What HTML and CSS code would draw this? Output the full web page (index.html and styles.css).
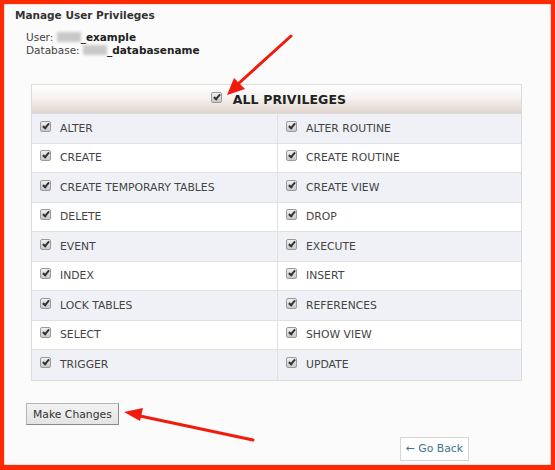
FILE: index.html
```html
<!DOCTYPE html>
<html>
<head>
<meta charset="utf-8">
<link rel="stylesheet" href="styles.css">
</head>
<body>
<div class="frame">
  <div class="title">Manage User Privileges</div>
  <div class="info">
    <div>User: <span class="blur"></span><b>_example</b></div>
    <div>Database: <span class="blur"></span><b>_databasename</b></div>
  </div>
  <div class="table">
    <div class="head"><span class="cb"></span><span>ALL PRIVILEGES</span></div>
    <div class="row odd"><div class="cell"><span class="cb"></span>ALTER</div><div class="cell"><span class="cb"></span>ALTER ROUTINE</div></div>
    <div class="row"><div class="cell"><span class="cb"></span>CREATE</div><div class="cell"><span class="cb"></span>CREATE ROUTINE</div></div>
    <div class="row odd"><div class="cell"><span class="cb"></span>CREATE TEMPORARY TABLES</div><div class="cell"><span class="cb"></span>CREATE VIEW</div></div>
    <div class="row"><div class="cell"><span class="cb"></span>DELETE</div><div class="cell"><span class="cb"></span>DROP</div></div>
    <div class="row odd"><div class="cell"><span class="cb"></span>EVENT</div><div class="cell"><span class="cb"></span>EXECUTE</div></div>
    <div class="row"><div class="cell"><span class="cb"></span>INDEX</div><div class="cell"><span class="cb"></span>INSERT</div></div>
    <div class="row odd"><div class="cell"><span class="cb"></span>LOCK TABLES</div><div class="cell"><span class="cb"></span>REFERENCES</div></div>
    <div class="row"><div class="cell"><span class="cb"></span>SELECT</div><div class="cell"><span class="cb"></span>SHOW VIEW</div></div>
    <div class="row odd"><div class="cell"><span class="cb"></span>TRIGGER</div><div class="cell"><span class="cb"></span>UPDATE</div></div>
  </div>
  <div class="actions">
    <button class="btn">Make Changes</button>
  </div>
  <div class="back-wrap">
    <a class="back">&larr; Go Back</a>
  </div>
  <svg class="arrows" width="555" height="470" viewBox="0 0 555 470">
    <line x1="291" y1="36" x2="238" y2="84" stroke="#f21a0a" stroke-width="3" stroke-linecap="round"/>
    <polygon points="227,95 234,78 245,89" fill="#f21a0a"/>
    <line x1="253" y1="440" x2="140" y2="416" stroke="#f21a0a" stroke-width="3" stroke-linecap="round"/>
    <polygon points="124,412 143,408 140,421" fill="#f21a0a"/>
  </svg>
</div>
</body>
</html>
```

FILE: styles.css
```css
html, body {
  margin: 0;
  padding: 0;
}
body {
  width: 555px;
  height: 470px;
  overflow: hidden;
  font-family: "DejaVu Sans", Verdana, sans-serif;
  color: #333;
}
.frame {
  position: relative;
  width: 555px;
  height: 470px;
  box-sizing: border-box;
  border: 4px solid #ff2a00;
  border-bottom-width: 5px;
  background: #fbfbfb;
  box-shadow: inset 0 0 2px rgba(0,0,0,0.35);
  padding: 4px 0 0 11px;
}
.title {
  font-size: 10.5px;
  font-weight: bold;
  line-height: 14px;
  color: #333;
}
.info {
  margin: 9px 0 0 11px;
  font-size: 10.5px;
  line-height: 13px;
  color: #444;
}
.info b {
  color: #222;
}
.blur {
  display: inline-block;
  width: 24px;
  height: 10px;
  vertical-align: -1px;
  background: #c8c8c8;
  filter: blur(1.5px);
}
.table {
  margin: 27px 0 0 16px;
  width: 491px;
  box-sizing: border-box;
  border: 1px solid #dcdcdc;
  font-size: 10.8px;
  color: #444;
}
.head {
  height: 28px;
  display: flex;
  align-items: center;
  justify-content: center;
  gap: 11px;
  background: linear-gradient(#ffffff 0%, #f6f3f1 45%, #e0d4cc 100%);
  font-size: 12.5px;
  font-weight: bold;
  color: #222;
  letter-spacing: 0.1px;
  border-bottom: 1px solid #dcdcdc;
  padding-left: 4px;
}
.row {
  display: grid;
  grid-template-columns: 245px 1fr;
  height: 29.5px;
  background: #fff;
  border-bottom: 1px solid #e0e0e0;
  box-sizing: border-box;
}
.row:last-child {
  border-bottom: none;
}
.row.odd {
  background: #eff1f6;
}
.cell {
  display: flex;
  align-items: center;
  gap: 9px;
  padding-left: 8px;
}
.cell + .cell {
  border-left: 1px solid #e0e0e0;
}
.cb {
  position: relative;
  display: inline-block;
  width: 9px;
  height: 9px;
  border: 1px solid #9a9a9a;
  border-radius: 2px;
  background: linear-gradient(#f0f0f0, #c8c8c8);
  flex: none;
  margin-top: -4px;
}
.cb::after {
  content: "";
  position: absolute;
  left: 3px;
  top: 0px;
  width: 2px;
  height: 5px;
  border-right: 2px solid #333;
  border-bottom: 2px solid #333;
  transform: rotate(40deg);
}
.actions {
  margin: 22px 0 0 11px;
}
.btn {
  font-family: "DejaVu Sans", Verdana, sans-serif;
  font-size: 10.8px;
  color: #333;
  height: 22px;
  padding: 0 6px;
  background: linear-gradient(#f2f2f2, #e4e4e4);
  border: 1px solid #b5b5b5;
  border-right-color: #8a8a8a;
  border-bottom-color: #8a8a8a;
  border-radius: 0;
}
.back-wrap {
  display: flex;
  justify-content: flex-end;
  margin: 12px 82px 0 0;
}
.back {
  display: inline-block;
  height: 24px;
  line-height: 22px;
  box-sizing: border-box;
  padding: 0 5px;
  border: 1px solid #d6d6d6;
  background: #fff;
  color: #3c7590;
  font-size: 10.8px;
}
.arrows {
  position: absolute;
  left: -4px;
  top: -4px;
  pointer-events: none;
}
```
